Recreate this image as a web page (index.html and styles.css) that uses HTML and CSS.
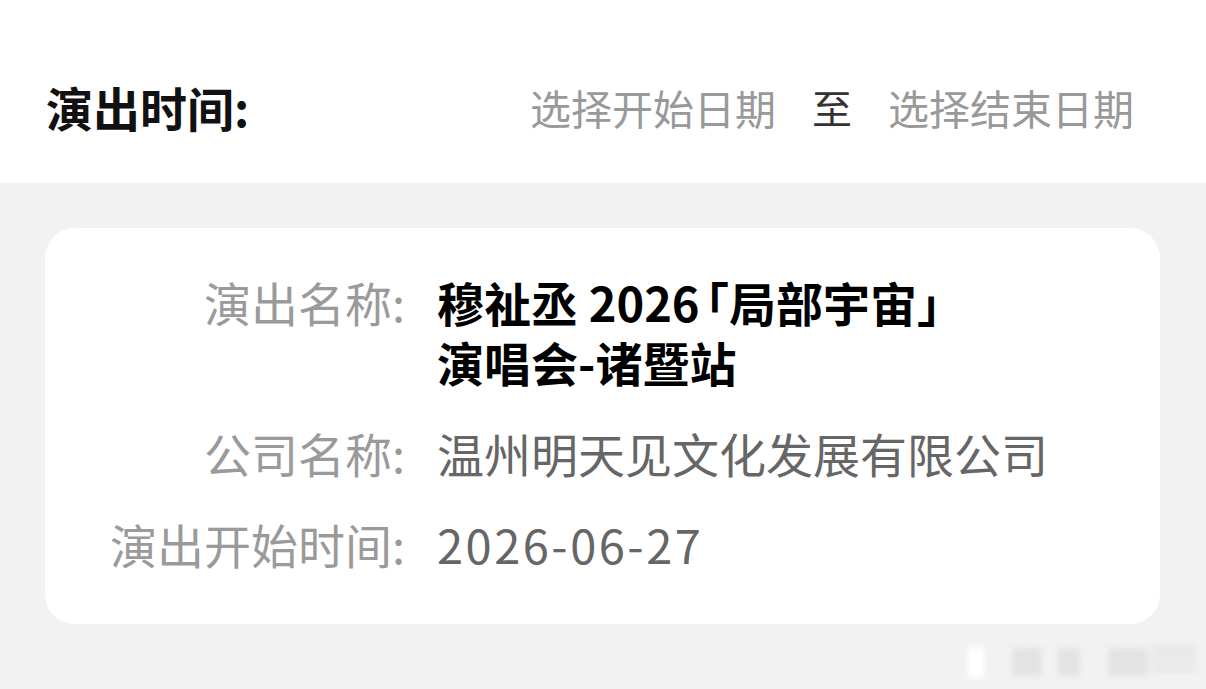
FILE: index.html
```html
<!DOCTYPE html>
<html lang="zh-CN">
<head>
<meta charset="utf-8">
<title>演出时间</title>
<link rel="stylesheet" href="styles.css">
</head>
<body>
<div class="page">
  <header class="filter">
    <div class="filter-title">演出时间:</div>
    <div class="filter-range">
      <span class="date-pick">选择开始日期</span>
      <span class="range-sep">至</span>
      <span class="date-pick">选择结束日期</span>
    </div>
  </header>
  <section class="card">
    <div class="row">
      <div class="label">演出名称:</div>
      <div class="value strong">
        <div class="line">穆祉丞 2026<span class="br">「局部宇宙」</span></div>
        <div class="line">演唱会-诸暨站</div>
      </div>
    </div>
    <div class="row">
      <div class="label">公司名称:</div>
      <div class="value">温州明天见文化发展有限公司</div>
    </div>
    <div class="row">
      <div class="label">演出开始时间:</div>
      <div class="value date">2026-06-27</div>
    </div>
  </section>
  <div class="watermark" aria-hidden="true">
    <span class="wm a"></span><span class="wm b"></span><span class="wm c"></span><span class="wm d"></span><span class="wm e"></span>
  </div>
</div>
</body>
</html>
```
FILE: styles.css
```css
html, body {
  margin: 0;
  padding: 0;
}
body {
  background: #f2f2f2;
  font-family: "Noto Sans CJK SC", "Noto Sans", sans-serif;
  width: 1206px;
  height: 689px;
  overflow: hidden;
}
.page {
  position: relative;
  width: 1206px;
  height: 689px;
}
.filter {
  background: #ffffff;
  height: 183px;
  box-sizing: border-box;
  padding: 77px 72px 0 46px;
  display: flex;
  justify-content: space-between;
  align-items: flex-start;
}
.filter-title {
  font-size: 47px;
  font-weight: 700;
  color: #111;
  line-height: 60px;
}
.filter-range {
  display: flex;
  align-items: center;
  gap: 36px;
  line-height: 60px;
}
.date-pick {
  font-size: 41px;
  color: #999999;
}
.range-sep {
  font-size: 40px;
  color: #333333;
}
.card {
  margin: 45px 46px 0 45px;
  background: #ffffff;
  border-radius: 30px;
  padding: 44px 0 50px 0;
  display: flex;
  flex-direction: column;
  gap: 31px;
}
.row {
  display: grid;
  grid-template-columns: 360px 1fr;
  column-gap: 32px;
  align-items: start;
}
.label {
  text-align: right;
  font-size: 47px;
  line-height: 60px;
  color: #9a9a9a;
}
.value {
  font-size: 47px;
  line-height: 60px;
  color: #666666;
}
.value.strong {
  color: #000000;
  font-weight: 700;
  display: flex;
  flex-direction: column;
}
.line {
  height: 60px;
  line-height: 60px;
  white-space: nowrap;
}
.value.date {
  letter-spacing: 2.5px;
}
.br {
  font-feature-settings: "halt";
  margin-left: 6px;
}
.watermark {
  position: absolute;
  left: 960px;
  top: 640px;
  width: 240px;
  height: 44px;
  filter: blur(3px);
}
.wm {
  position: absolute;
  display: block;
}
.wm.a {
  left: 8px; top: 6px; width: 16px; height: 32px;
  background: #ffffff;
}
.wm.b {
  left: 52px; top: 8px; width: 30px; height: 28px;
  background: rgba(200,200,200,0.35);
}
.wm.c {
  left: 98px; top: 8px; width: 22px; height: 28px;
  background: rgba(200,200,200,0.35);
}
.wm.d {
  left: 148px; top: 8px; width: 40px; height: 28px;
  background: rgba(200,200,200,0.35);
}
.wm.e {
  left: 192px; top: 8px; width: 44px; height: 28px;
  background: repeating-linear-gradient(to bottom, rgba(190,190,190,0.55) 0 3px, rgba(255,255,255,0.5) 3px 7px);
}
```
